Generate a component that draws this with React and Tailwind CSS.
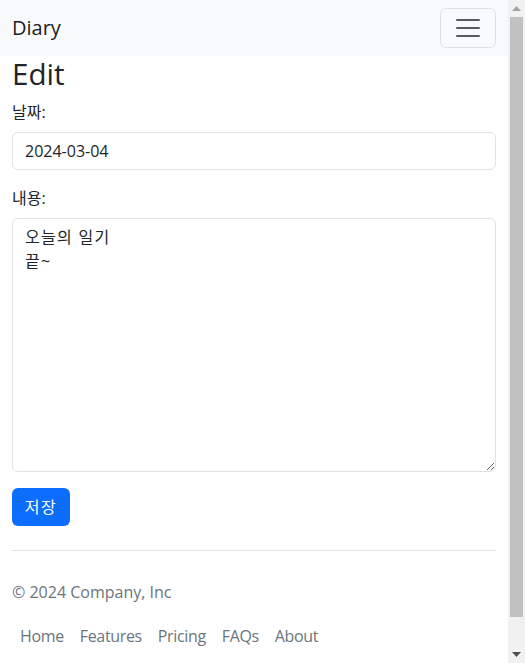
import { useState } from 'react';

const links = ['Home', 'Features', 'Pricing', 'FAQs', 'About'];

const App = () => {
  const [date, setDate] = useState('2024-03-04');
  const [body, setBody] = useState('오늘의 일기\n끝~');

  return (
    <div className="h-screen flex overflow-hidden bg-white text-[16px] leading-6 text-[#212529] font-['Segoe_UI','Open_Sans','Noto_Sans_CJK_KR',sans-serif]">
      <div className="flex-1 min-w-0">
        <nav className="bg-[#f8f9fa] h-14 px-3 flex items-center justify-between">
          <a href="#" className="text-[20px] leading-[30px] text-black/90">Diary</a>
          <button className="w-14 h-10 border border-black/10 rounded-md flex items-center justify-center">
            <svg width="30" height="30" viewBox="0 0 30 30">
              <path d="M4 7h22M4 15h22M4 23h22" stroke="rgba(33,37,41,0.75)" strokeWidth="2" strokeLinecap="round" />
            </svg>
          </button>
        </nav>

        <main className="px-3">
          <h1 className="text-[29.6px] leading-[1.2] font-medium mb-2">Edit</h1>
          <form onSubmit={e => e.preventDefault()}>
            <div className="mb-4">
              <label className="block mb-2">날짜:</label>
              <input
                type="text"
                value={date}
                onChange={e => setDate(e.target.value)}
                className="block w-full h-[38px] px-3 py-1.5 border border-[#dee2e6] rounded-md outline-none"
              />
            </div>
            <div className="mb-4">
              <label className="block mb-2">내용:</label>
              <textarea
                value={body}
                onChange={e => setBody(e.target.value)}
                className="block w-full h-[254px] px-3 py-1.5 tracking-[1.3px] border border-[#dee2e6] rounded-md outline-none"
              />
            </div>
            <button className="h-[38px] w-[58px] tracking-[1.5px] bg-[#0d6efd] text-white rounded-md">저장</button>
          </form>

          <footer className="mt-6 mb-6 border-t border-[#dee2e6] pt-[29px] pb-4">
            <p className="text-[#6c757d]">© 2024 Company, Inc</p>
            <ul className="flex mt-3 tracking-[-0.35px]">
              {links.map(l => (
                <li key={l}><a href="#" className="block px-2 py-2 text-[#6c757d]">{l}</a></li>
              ))}
            </ul>
          </footer>
        </main>
      </div>

      {/* page scrollbar */}
      <div className="w-[17px] shrink-0 bg-[#f1f1f1] flex flex-col items-center">
        <div className="h-[17px] flex items-center justify-center">
          <svg width="9" height="5" viewBox="0 0 9 5"><path d="M4.5 0L9 5H0z" fill="#a3a3a3" /></svg>
        </div>
        <div className="w-[13px] h-[600px] bg-[#c1c1c1]" />
        <div className="flex-1" />
        <div className="h-[17px] flex items-center justify-center">
          <svg width="9" height="5" viewBox="0 0 9 5"><path d="M0 0H9L4.5 5z" fill="#505050" /></svg>
        </div>
      </div>
    </div>
  );
};

export default App;
